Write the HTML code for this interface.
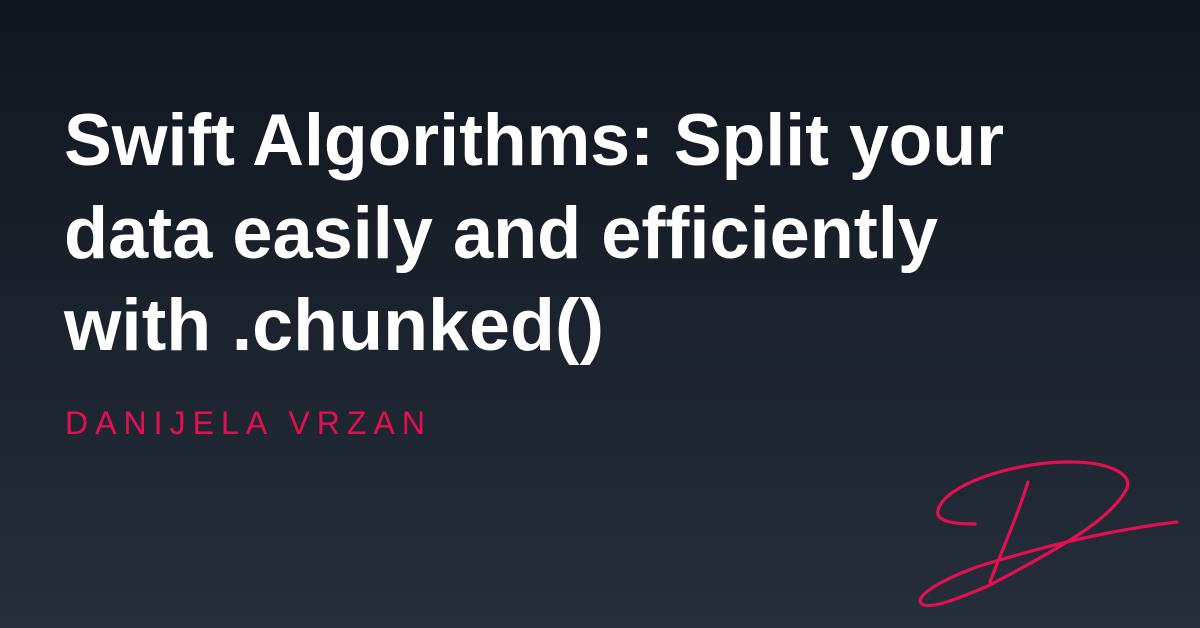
<!DOCTYPE html>
<html><head><meta charset="utf-8"><style>
html,body{margin:0;padding:0}
body{width:1200px;height:628px;overflow:hidden;background:linear-gradient(180deg,#11161e 0%,#1b222d 50%,#252e3b 100%);}
svg{display:block}
</style></head><body>
<svg width="1200" height="628" viewBox="0 0 1200 628">
<g font-family="Liberation Sans, sans-serif" font-weight="700" font-size="73" fill="#ffffff">
<text x="64" y="165" textLength="940" lengthAdjust="spacingAndGlyphs">Swift Algorithms: Split your</text>
<text x="64" y="258" textLength="874" lengthAdjust="spacingAndGlyphs">data easily and efficiently</text>
<text x="64" y="350" textLength="540" lengthAdjust="spacingAndGlyphs">with .chunked()</text>
</g>
<text x="65" y="434" font-family="Liberation Sans, sans-serif" font-size="32" fill="#e3104f" textLength="360" lengthAdjust="spacing">DANIJELA VRZAN</text>
<g fill="none" stroke="#e3104f" stroke-width="3.2" stroke-linecap="round">
<path d="M975 524 C955 524 935 522 938 510 C945 485 1010 463 1065 462 C1110 461 1135 475 1126 490 C1110 520 1060 548 990 585 C960 598 930 610 922 604 C910 595 960 570 1000 560 C1050 545 1110 530 1177 522"/>
<path d="M1028 482 C1018 515 1000 555 990 582"/>
</g>
</svg>
</body></html>
